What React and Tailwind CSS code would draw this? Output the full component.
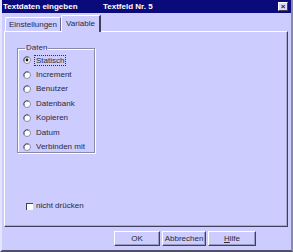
import React from "react";

const options = ["Statisch", "Increment", "Benutzer", "Datenbank", "Kopieren", "Datum", "Verbinden mit"];

const Radio = ({ checked }) => (
  <svg width="8" height="8" viewBox="0 0 8 8" className="shrink-0">
    <circle cx="4" cy="4" r="3.5" fill="#ffffff" stroke="#8a8aa8" strokeWidth="1" />
    <path d="M1.2 5.5 A3.3 3.3 0 0 1 5.5 1.2" fill="none" stroke="#4a4a66" strokeWidth="1" />
    {checked && <circle cx="4" cy="4" r="1.4" fill="#111111" />}
  </svg>
);

const Button = ({ width, children }) => (
  <div className={`${width} h-[15px] flex items-center justify-center border border-t-white border-l-white border-r-[#404058] border-b-[#404058] shadow-[inset_-1px_-1px_0_#9a9ac0] text-[#2a2a3a]`}>
    {children}
  </div>
);

export default function App() {
  return (
    <div className="w-[293px] h-[252px] bg-[#ccccff] font-['Liberation_Sans',Arial,sans-serif] text-[8px] text-[#2a2a3a] flex flex-col overflow-hidden border-l-2 border-l-[#e4e4ff] border-r-2 border-r-[#8a8aa8] border-b-2 border-b-[#50506a]">
      <div className="h-[13px] bg-[#0a0a7a] flex items-center text-white font-bold shrink-0 -ml-[2px]">
        <span className="ml-[3px] w-[100px]">Textdaten eingeben</span>
        <span>Textfeld Nr. 5</span>
        <div className="ml-auto mr-[3px] w-[10px] h-[9px] bg-[#dcdcff] border border-t-white border-l-white border-r-[#404058] border-b-[#404058] flex items-center justify-center text-[#1a1a2a] text-[8px] font-bold leading-none">
          ×
        </div>
      </div>

      <div className="flex items-end h-[18px] pl-[3px] shrink-0">
        <div className="h-[14px] w-[56px] flex items-center justify-center border-t border-l border-t-white border-l-white border-r border-r-[#6a6a8a] rounded-tl-[2px]">
          Einstellungen
        </div>
        <div className="h-[17px] w-[40px] flex items-center justify-center border-t border-l border-t-white border-l-white border-r-2 border-r-[#404058] -mb-[1px] relative z-10 bg-[#ccccff] rounded-tl-[2px]">
          Variable
        </div>
      </div>

      <div className="ml-[2px] w-[284px] h-[196px] border border-t-white border-l-white border-r-[#404058] border-b-[#404058] shadow-[inset_-1px_-1px_0_#a8a8cc] shrink-0 pt-[12px] pl-[12px] flex flex-col">
        <fieldset className="w-[78px] h-[109px] border border-[#8a8aa8] shadow-[1px_1px_0_#ffffff,inset_1px_1px_0_#ffffff] px-[5px] pt-[1px]">
          <legend className="px-[1px] ml-[2px] leading-none">Daten</legend>
          <div className="flex flex-col gap-[6.5px] mt-[3px]">
            {options.map((o, i) => (
              <div key={o} className="flex items-center gap-[3px] h-[8px]">
                <Radio checked={i === 0} />
                <span className={i === 0 ? "border border-dotted border-[#333] px-[1px] leading-[9px]" : "pl-[2px]"}>{o}</span>
              </div>
            ))}
          </div>
        </fieldset>
        <div className="mt-[47px] ml-[9px] flex items-center gap-[3px]">
          <div className="w-[7px] h-[7px] bg-white border-t border-l border-t-[#404058] border-l-[#404058]" />
          <span>nicht drücken</span>
        </div>
      </div>

      <div className="flex mt-[4px] ml-[112px] gap-[2px]">
        <Button width="w-[46px]">OK</Button>
        <Button width="w-[44px]">Abbrechen</Button>
        <Button width="w-[48px]"><span><span className="underline">H</span>ilfe</span></Button>
      </div>
    </div>
  );
}
